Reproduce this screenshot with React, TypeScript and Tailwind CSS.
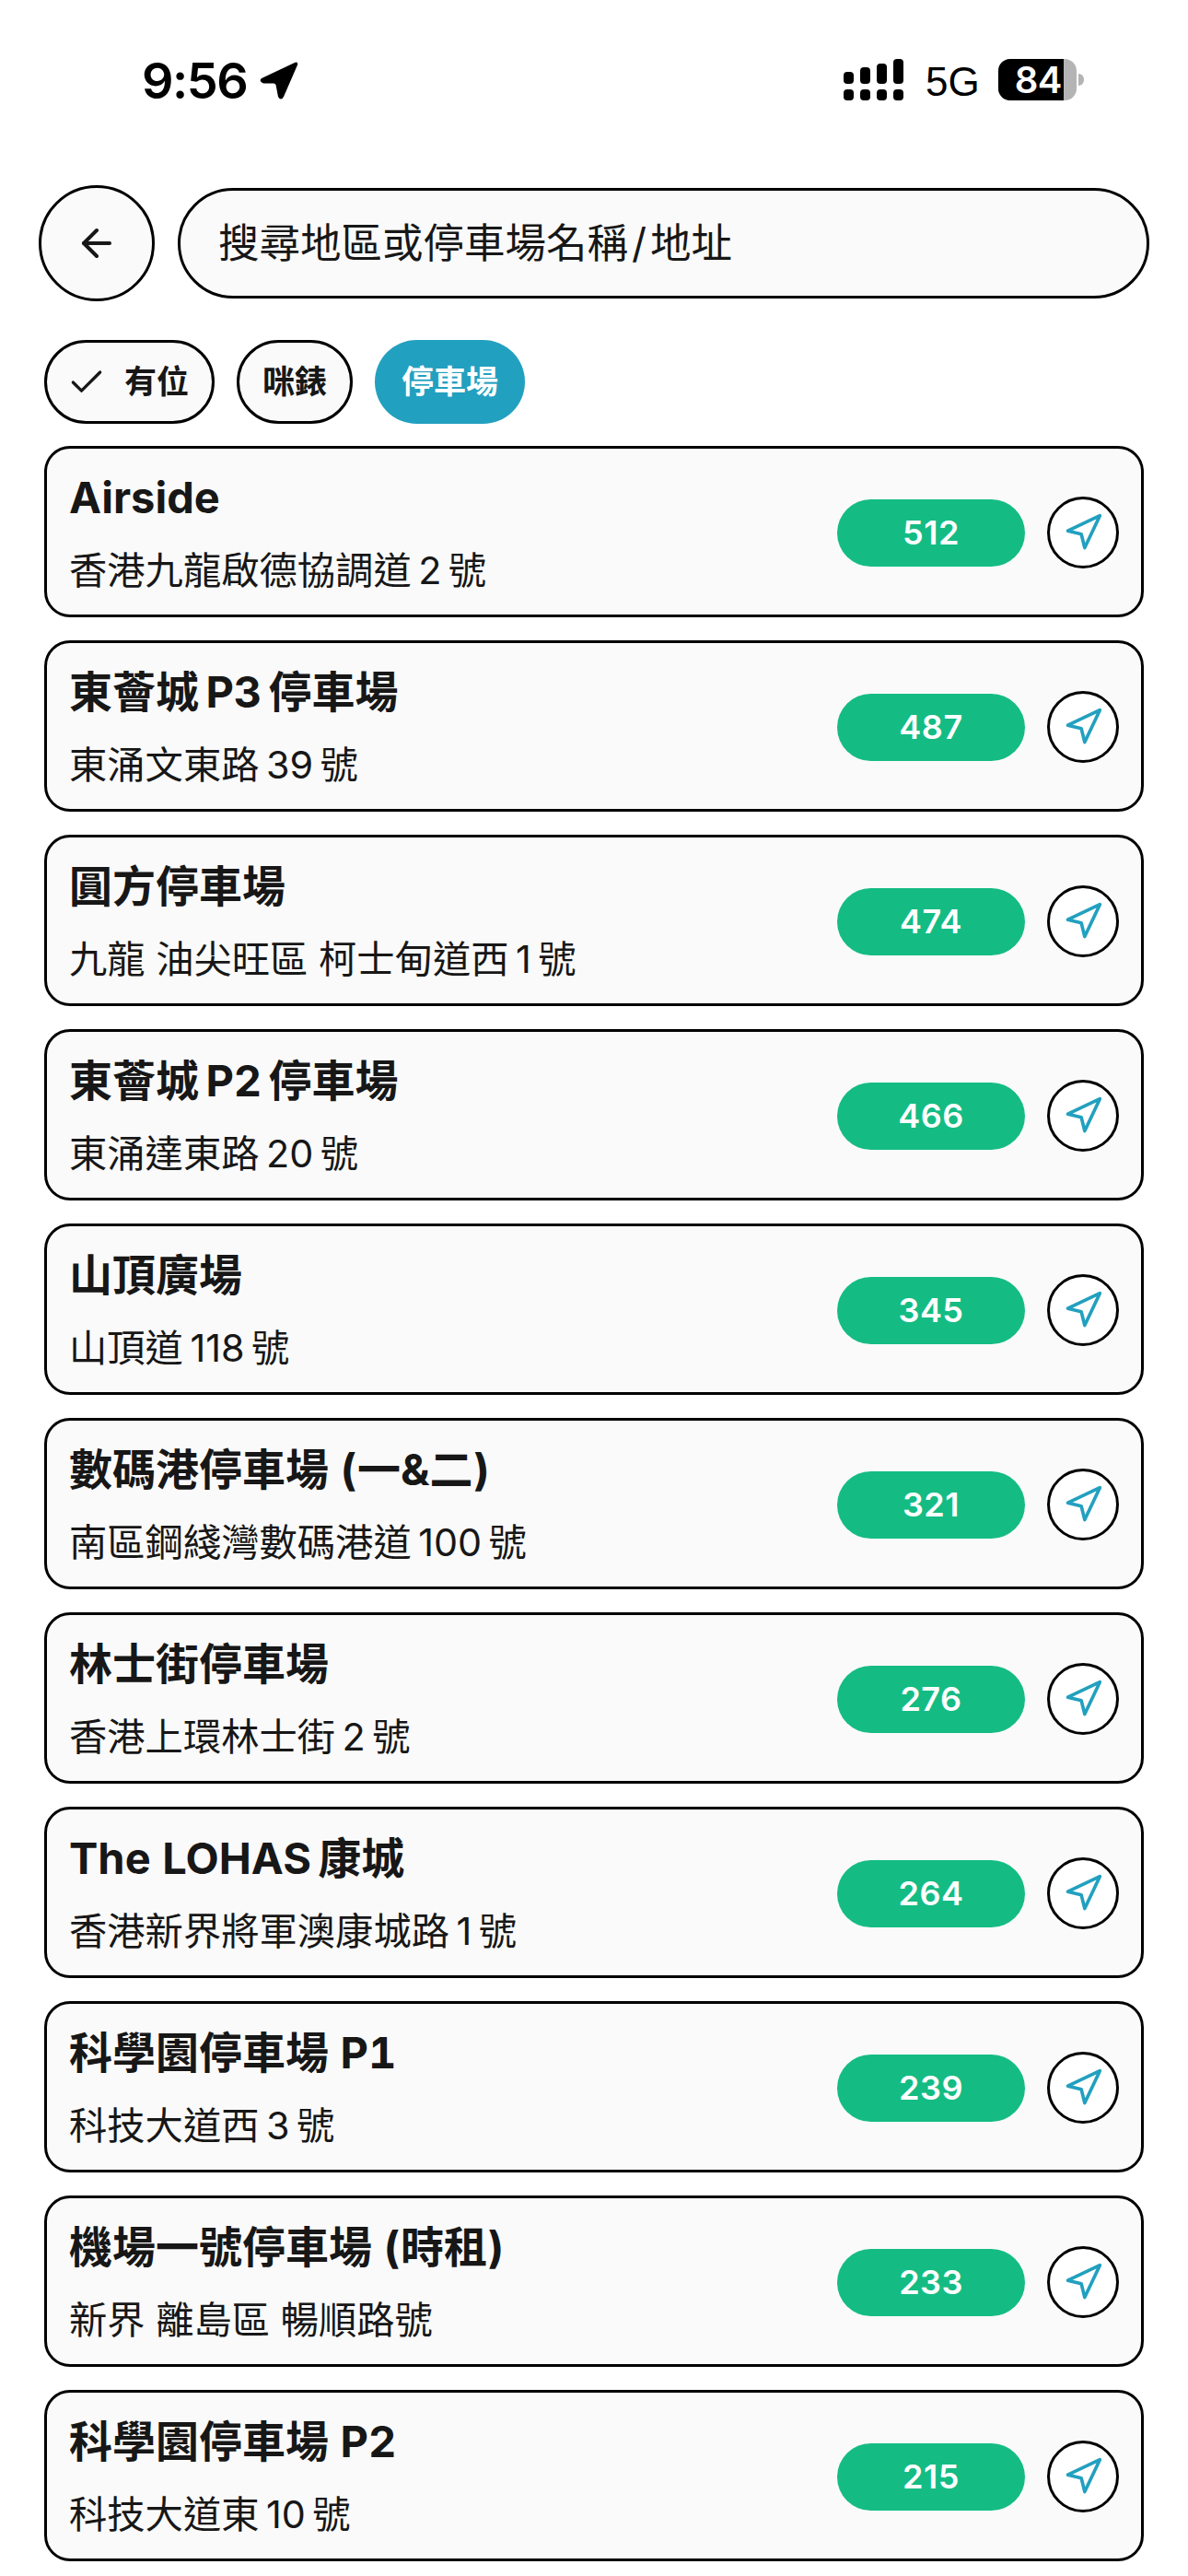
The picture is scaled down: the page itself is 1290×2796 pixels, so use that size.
import { ArrowLeft, Check, Navigation } from "lucide-react";

const T = "\u2009";
const H = "\u200A";
const rows = [
  ["Airside", `香港九龍啟德協調道${T}2${T}號`, "512"],
  [`東薈城${T}P3${T}停車場`, `東涌文東路${T}39${T}號`, "487"],
  ["圓方停車場", `九龍 油尖旺區 柯士甸道西${T}1${T}號`, "474"],
  [`東薈城${T}P2${T}停車場`, `東涌達東路${T}20${T}號`, "466"],
  ["山頂廣場", `山頂道${T}118${T}號`, "345"],
  ["數碼港停車場 (一&二)", `南區鋼綫灣數碼港道${T}100${T}號`, "321"],
  ["林士街停車場", `香港上環林士街${T}2${T}號`, "276"],
  [`The LOHAS${T}康城`, `香港新界將軍澳康城路${T}1${T}號`, "264"],
  ["科學園停車場 P1", `科技大道西${T}3${T}號`, "239"],
  ["機場一號停車場 (時租)", "新界 離島區 暢順路號", "233"],
  ["科學園停車場 P2", `科技大道東${T}10${T}號`, "215"],
];

function Signal() {
  const tops = [13, 18, 22, 27];
  return (
    <div className="flex gap-[7px] items-end h-[45px]">
      {tops.map((h, i) => (
        <div key={i} className="flex flex-col gap-[6px] w-[11px]">
          <div className="bg-black rounded-[4px]" style={{ height: h }} />
          <div className="bg-black rounded-[4px] h-[12px]" />
        </div>
      ))}
    </div>
  );
}

function Battery() {
  return (
    <div className="flex items-center gap-[2px]">
      <div className="flex h-[45px] w-[85px] rounded-[13px] bg-[#b4b4b4]">
        <div className="w-[71px] rounded-l-[13px] bg-black text-white text-[40px] font-semibold leading-[45px] text-right pr-[2px] tracking-[-0.5px]">84</div>
      </div>
      <div className="w-[6px] h-[13px] bg-[#b4b4b4] rounded-r-full" />
    </div>
  );
}

function Card({ title, addr, count }: { title: string; addr: string; count: string }) {
  return (
    <div className="flex items-center h-[186px] rounded-[28px] border-[3px] border-black bg-[#fafafa] pt-[2px] pl-[24px] pr-[24px]">
      <div className="flex-1 min-w-0">
        <div className="text-[47px] leading-[56px] font-bold tabular-nums text-[#171717] whitespace-nowrap">{title}</div>
        <div className="mt-[25px] text-[41.3px] leading-[52px] text-[#171717] whitespace-nowrap">{addr}</div>
      </div>
      <div className="flex items-center justify-center w-[204px] h-[73px] rounded-full bg-[#14bc84] text-white text-[36px] font-semibold tracking-[0.5px]">
        {count}
      </div>
      <div className="ml-[24px] flex items-center justify-center w-[78px] h-[78px] rounded-full border-[3px] border-black bg-white">
        <Navigation size={44} strokeWidth={2} className="text-[#22a0bf]" />
      </div>
    </div>
  );
}

export default function App() {
  return (
    <div className="w-[1290px] h-[2796px] overflow-hidden bg-white text-black font-[Inter,'Noto_Sans_CJK_TC',sans-serif]">
      <div className="flex items-start h-[201px] pt-[64px] pl-[154px] pr-[113px]">
        <div className="text-[54px] leading-[48px] font-semibold tracking-[-1.5px]">9:56</div>
        <svg width="42" height="42" viewBox="0 0 42 42" className="ml-[14px] mt-[3px]">
          <path d="M2 18 L38 1 Q42 -0.5 41 3.5 L26 38 Q23 43 20 38 L17.5 25 Q17 23.5 15 23.5 L4 23.5 Q-1.5 21 2 18 Z" fill="#000" />
        </svg>
        <div className="flex-1" />
        <Signal />
        <div className="ml-[24px] mt-[2px] w-[56px] text-[44px] leading-[45px] font-normal font-['Liberation_Sans'] whitespace-nowrap">5G</div>
        <div className="ml-[23px]">
          <Battery />
        </div>
      </div>

      <div className="flex items-center gap-[25px] pl-[42px] pr-[42px]">
        <div className="flex items-center justify-center w-[126px] h-[126px] rounded-full border-[3px] border-black bg-[#fafafa] shrink-0">
          <ArrowLeft size={48} strokeWidth={2} className="text-[#171717]" />
        </div>
        <div className="flex items-center flex-1 h-[120px] rounded-full border-[3px] border-black bg-[#fafafa] pl-[41px] text-[44.5px] text-[#171717]">
          {`搜尋地區或停車場名稱${H}/${H}地址`}
        </div>
      </div>

      <div className="flex gap-[24px] mt-[42px] pl-[48px]">
        <div className="flex items-center h-[91px] rounded-full border-[3px] border-black bg-[#fafafa] pl-[21px] pr-[25px] gap-[19px] text-[35px] font-bold text-[#171717]">
          <Check size={44} strokeWidth={1.8} />
          有位
        </div>
        <div className="flex items-center h-[91px] rounded-full border-[3px] border-black bg-[#fafafa] px-[25px] text-[35px] font-bold text-[#171717]">
          咪錶
        </div>
        <div className="flex items-center h-[91px] rounded-full bg-[#22a0bf] px-[29px] text-[35px] font-bold text-white">
          停車場
        </div>
      </div>

      <div className="flex flex-col gap-[25px] mt-[24px] ml-[48px] mr-[48px]">
        {rows.map((r) => (
          <Card key={r[2]} title={r[0]} addr={r[1]} count={r[2]} />
        ))}
      </div>
    </div>
  );
}
